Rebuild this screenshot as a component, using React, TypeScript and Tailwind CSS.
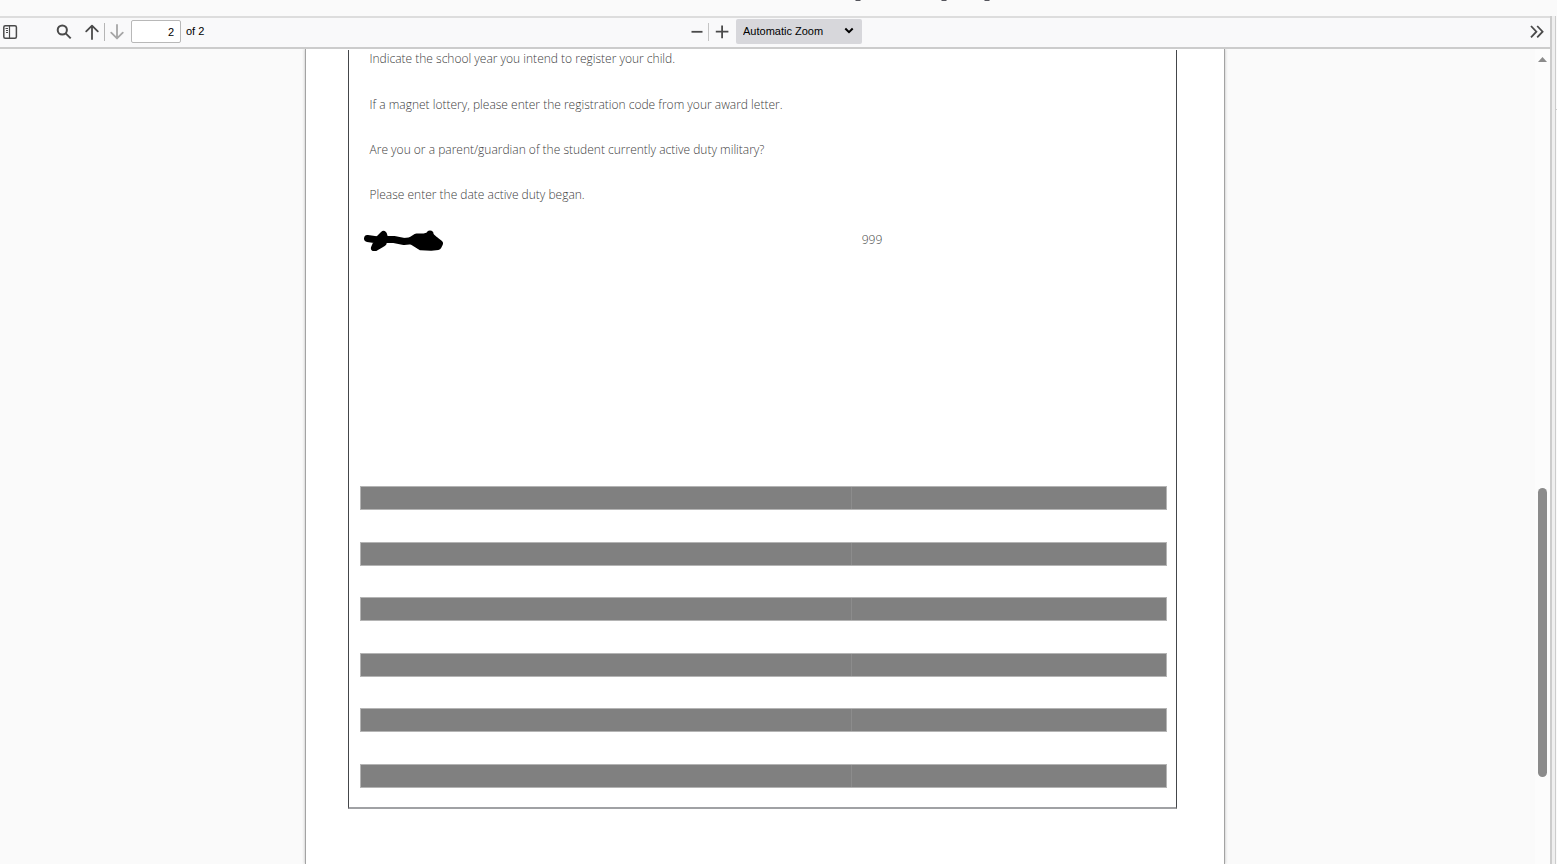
import React, { useState } from "react";

const questions = [
  { id: "year", label: "Indicate the school year you intend to register your child." },
  { id: "magnet", label: "If a magnet lottery, please enter the registration code from your award letter." },
  { id: "military", label: "Are you or a parent/guardian of the student currently active duty military?" },
  { id: "began", label: "Please enter the date active duty began." },
];

const shadedRows = [1, 2, 3, 4, 5, 6];

const zoomLevels = ["Automatic Zoom", "Actual Size", "Page Fit", "Page Width"];

function SidebarIcon() {
  return (
    <svg width="16" height="16" viewBox="0 0 16 16" fill="none" stroke="#4a4a4a">
      <rect x="1.8" y="1.8" width="12.6" height="12.4" rx="1.5" strokeWidth="1.5" />
      <path d="M7.5 2v12" strokeWidth="1.2" />
      <path d="M3.5 4.5h2.5M4 6.5h2M4 8.5h2" />
    </svg>
  );
}

function SearchIcon() {
  return (
    <svg width="16" height="16" viewBox="0 0 16 16" fill="none" stroke="#4a4a4a" strokeWidth="2">
      <circle cx="6.3" cy="6" r="4.6" />
      <path d="M9.7 9.4l5 5" />
    </svg>
  );
}

function ArrowIcon({ down = false }: { down?: boolean }) {
  return (
    <svg
      width="16"
      height="16"
      viewBox="0 0 16 16"
      fill="none"
      stroke={down ? "#a6a6a6" : "#4a4a4a"}
      strokeWidth="1.8"
      strokeLinecap="round"
      strokeLinejoin="round"
    >
      {down ? (
        <path d="M8 1v13.4M2.2 8.6L8 14.4l5.8-5.8" />
      ) : (
        <path d="M8 15V1.6M2.2 7.4L8 1.6l5.8 5.8" />
      )}
    </svg>
  );
}

function Toolbar() {
  const [page, setPage] = useState("2");
  const [zoom, setZoom] = useState(zoomLevels[0]);

  return (
    <div className="flex h-[33px] shrink-0 items-center border-y-2 border-t-[#dddddd] border-b-[#cccccc] bg-[#f9f9fa] pb-0.5 text-[11px] text-black">
      <div className="flex flex-1 items-center pl-0.5">
        <button type="button" aria-label="Toggle Sidebar" className="mr-[38px]">
          <SidebarIcon />
        </button>
        <button type="button" aria-label="Find in Document" className="mr-3">
          <SearchIcon />
        </button>
        <button type="button" aria-label="Previous Page">
          <ArrowIcon />
        </button>
        <span className="mx-1 h-[18px] w-px bg-[#b5b5b5]" />
        <button type="button" aria-label="Next Page" disabled className="mr-1.5">
          <ArrowIcon down />
        </button>
        <input
          aria-label="Page"
          value={page}
          onChange={(e) => setPage(e.target.value)}
          className="h-[23px] w-[50px] rounded-xs border border-[#b8b8b8] bg-white px-1.5 text-right outline-none"
        />
        <span className="ml-[5px]">of 2</span>
      </div>

      <div className="flex items-center pl-[5px]">
        <button type="button" aria-label="Zoom Out">
          <svg width="14" height="14" viewBox="0 0 14 14" stroke="#4a4a4a" strokeWidth="1.8">
            <path d="M1.500 6.800h11" />
          </svg>
        </button>
        <span className="mr-1.5 ml-1 h-[18px] w-px bg-[#c4c4c4]" />
        <button type="button" aria-label="Zoom In" className="mr-[7px]">
          <svg width="14" height="14" viewBox="0 0 14 14" stroke="#4a4a4a" strokeWidth="1.8">
            <path d="M.8 6.6h12.6M7.1 .4v12.8" />
          </svg>
        </button>
        <div className="relative">
          <select
            aria-label="Zoom"
            value={zoom}
            onChange={(e) => setZoom(e.target.value)}
            className="block h-[25px] w-[126px] appearance-none rounded-xs bg-[#d7d7db] pl-[7px] outline-none"
          >
            {zoomLevels.map((level) => (
              <option key={level}>{level}</option>
            ))}
          </select>
          <svg
            className="pointer-events-none absolute top-2 right-2"
            width="10"
            height="8"
            viewBox="0 0 10 8"
            fill="none"
            stroke="#000"
            strokeWidth="2"
          >
            <path d="M1.3 1.5L5 5.2l3.7-3.7" />
          </svg>
        </div>
      </div>

      <div className="flex flex-1 justify-end pr-[5px]">
        <button type="button" aria-label="Tools">
          <svg width="16" height="16" viewBox="0 0 16 16" fill="none" stroke="#4a4a4a" strokeWidth="1.8">
            <path d="M2 2l5.4 5.7L2 13.4M8.2 2l5.4 5.7-5.4 5.7" />
          </svg>
        </button>
      </div>
    </div>
  );
}

function Scribble() {
  return (
    <svg
      width="80"
      height="22"
      viewBox="0 0 80 22"
      className="-ml-1.5"
      fill="none"
      stroke="#000"
      strokeWidth="7"
      strokeLinejoin="round"
      strokeLinecap="round"
    >
      <path d="M3.500 9.500L14 11 19.500 5.500 21 10.500l9 0 10 2 10-1M14 11l-3.500 8 8.500-5" />
      <path
        d="M47 11.500l5.500-3.500h8l5.500-1.500 5 4.500 4.500 3.500-1.500 3-7 .800-10-.500z"
        fill="#000"
      />
      <circle cx="66" cy="5" r="3.5" fill="#000" stroke="none" />
    </svg>
  );
}

function DocumentPage() {
  return (
    <div className="w-full max-w-[920px] border-x border-[#a3a3a3] bg-white pr-[47px] pl-[42px] shadow-[0_0_3px_#bbbbbb]">
      <div className="mt-px h-[759px] border-x border-b-2 border-t-0 border-x-[#44464a] border-b-[#a0a1a4] pr-[9px] pl-[11px]">
        <table className="w-full table-fixed border-collapse text-left font-['Open_Sans','Noto_Sans',sans-serif] text-[12px] text-[#404040]">
          <colgroup>
            <col className="w-[61%]" />
            <col />
          </colgroup>
          <tbody>
            {questions.map((question, index) => (
              <tr key={question.id} className={index === 0 ? "h-8" : "h-[45px]"}>
                <th
                  scope="row"
                  colSpan={2}
                  className={
                    index === 0 ? "pb-3.5 pl-2.5 font-light" : "pl-2.5 font-light"
                  }
                >
                  {question.label}
                </th>
              </tr>
            ))}
            <tr className="h-[45px]">
              <th scope="row" aria-label="Hidden" className="pl-2.5 font-light">
                <Scribble />
              </th>
              <td className="pl-2.5 font-light">999</td>
            </tr>
          </tbody>
        </table>

        <div className="mt-[224px] flex h-[302px] flex-col justify-between">
          {shadedRows.map((row) => (
            <div
              key={row}
              className="grid h-6 grid-cols-[61%_1fr] border border-[#b4b4b4] bg-[#808080]"
            >
              <div className="border-r border-[#8c8c8c]" />
              <div />
            </div>
          ))}
        </div>
      </div>
    </div>
  );
}

export default function App() {
  return (
    <div className="flex h-screen flex-col overflow-hidden bg-[#fafafa] font-['Liberation_Sans',Arial,sans-serif]">
      <header className="flex h-4 shrink-0 justify-center pl-[289px]">
        {/* only the descenders of the heading are scrolled into view */}
        <svg width="136" height="2" viewBox="0 0 136 2" fill="#55555c">
          <path d="M0 0h6L5 1H1zM86 0h6l-1 1h-4zM129 0h6l-1 1h-4z" />
        </svg>
      </header>

      <div className="flex min-h-0 flex-1">
        <main className="flex min-w-0 flex-1 flex-col">
          <Toolbar />
          <div className="flex min-h-0 flex-1">
            <div className="flex min-w-0 flex-1 justify-center overflow-hidden pr-1.5">
              <DocumentPage />
            </div>
            <div className="flex w-[15px] flex-col items-center bg-[#fcfcfc] pt-2">
              <svg width="9" height="5" viewBox="0 0 9 5" fill="#8b8b8b">
                <path d="M4.500 0L9 5H0z" />
              </svg>
              <div className="mt-[426px] h-[289px] w-[9px] rounded-full bg-[#8b8b8b]" />
            </div>
          </div>
        </main>
        <div className="w-1.5 shrink-0 border-r border-l-2 border-[#cccccc] bg-[#efefef]" />
        <div className="w-px shrink-0 pt-[93px]">
          <div className="h-px bg-[#cccccc]" />
        </div>
      </div>
    </div>
  );
}
